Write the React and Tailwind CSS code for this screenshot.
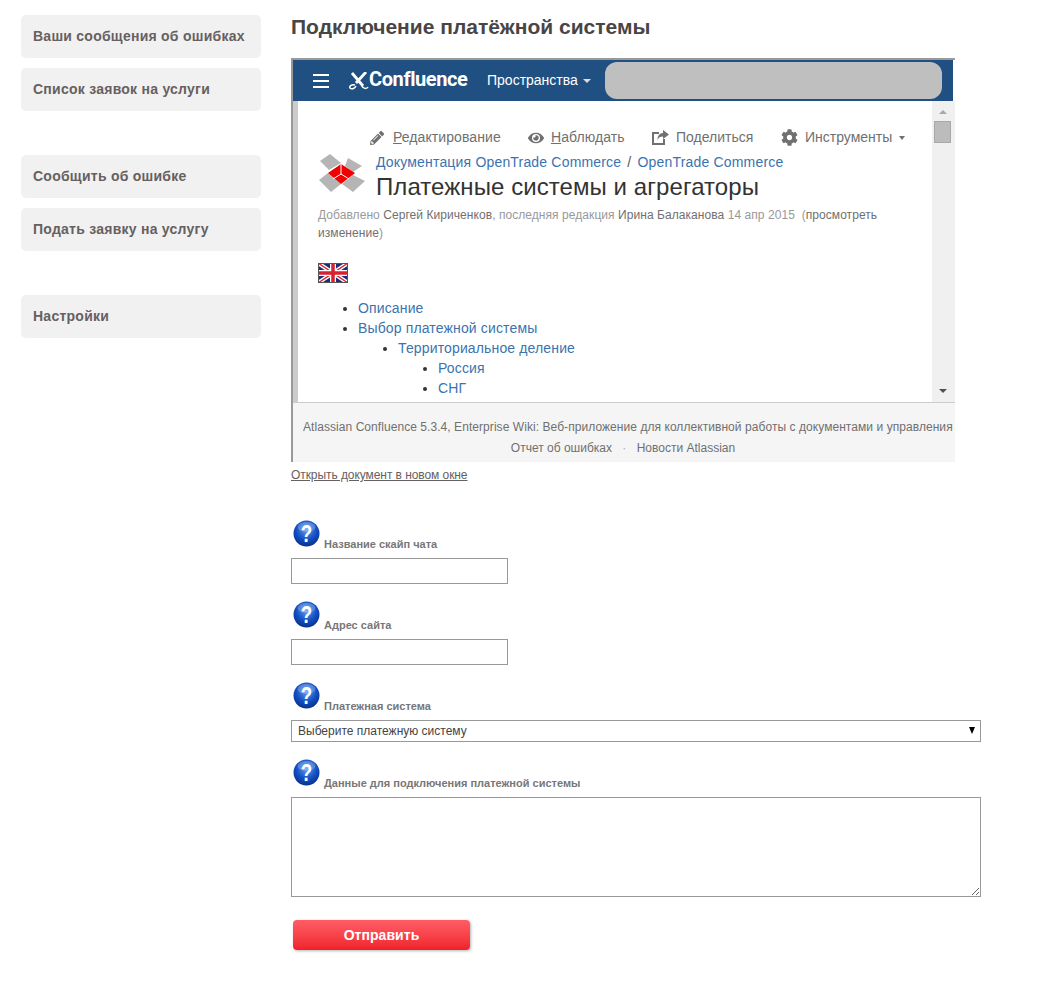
import { FaPencilAlt, FaEye, FaCog } from 'react-icons/fa';

const font = { fontFamily: '"Liberation Sans", Arial, sans-serif' };

function HelpIcon({ id }) {
  return (
    <svg width="27" height="27" viewBox="0 0 27 27" className="shrink-0">
      <defs>
        <radialGradient id={id} cx="50%" cy="35%" r="70%">
          <stop offset="0%" stopColor="#5f9cf0" />
          <stop offset="55%" stopColor="#1350c4" />
          <stop offset="100%" stopColor="#062a80" />
        </radialGradient>
      </defs>
      <circle cx="13.5" cy="13.5" r="13" fill={`url(#${id})`} />
      <ellipse cx="13.5" cy="7" rx="9" ry="5" fill="#ffffff" opacity="0.22" />
      <text x="0" y="0" transform="translate(13.5 22) scale(0.78 1)" textAnchor="middle" fontSize="24" fontWeight="700" fill="#ffffff" fontFamily="Liberation Sans, sans-serif">?</text>
    </svg>
  );
}

function BoxLogo() {
  return (
    <svg width="46" height="38" viewBox="0 0 46 38" className="shrink-0">
      <polygon points="11,0 22,9 10,16 1,7" fill="#b5b5b5" />
      <polygon points="29,4 43,12 34,18 26,12" fill="#b5b5b5" />
      <polygon points="0,26 9,19 22,30 12,38" fill="#b5b5b5" />
      <polygon points="23,30 34,21 46,27 34,38" fill="#b5b5b5" />
      <polygon points="9,19 22,10 36,19 22,30" fill="#ee0000" />
      <path d="M22 10 V20 M22 20 L14 25 M22 20 L30 25" stroke="#ffffff" strokeWidth="1" fill="none" />
    </svg>
  );
}

function Flag() {
  return (
    <svg width="30" height="20" viewBox="0 0 30 20" className="block">
      <rect width="30" height="20" fill="#1a2d78" />
      <path d="M0 0 L30 20 M30 0 L0 20" stroke="#ffffff" strokeWidth="4" />
      <path d="M0 0 L30 20 M30 0 L0 20" stroke="#d8202f" strokeWidth="1.4" />
      <path d="M15 0 V20 M0 10 H30" stroke="#ffffff" strokeWidth="6" />
      <path d="M15 0 V20 M0 10 H30" stroke="#d8202f" strokeWidth="3.5" />
      <rect x="0.5" y="0.5" width="29" height="19" fill="none" stroke="#555555" />
    </svg>
  );
}

function ConfluenceMark() {
  return (
    <svg width="20" height="18" viewBox="0 0 20 18" className="shrink-0">
      <path d="M3 1 L14 14 M17 0 L7 11" stroke="#ffffff" strokeWidth="2.8" fill="none" />
      <path d="M6 13 C3 12 0 14 1 16 C3 18 6 16 7 14" stroke="#ffffff" strokeWidth="1.5" fill="none" />
      <path d="M13 14 C14 17 18 17 19 15" stroke="#ffffff" strokeWidth="1.5" fill="none" />
    </svg>
  );
}

function ShareIcon() {
  return (
    <svg width="17" height="15" viewBox="0 0 17 15" className="shrink-0">
      <path d="M7 3 H1 V14 H12 V9" stroke="#707070" strokeWidth="2" fill="none" />
      <path d="M11 0 L17 4.5 L11 9 V6.5 C8 6.5 6.5 7.5 5.5 10 C5.5 6 7.5 3 11 3 Z" fill="#707070" />
    </svg>
  );
}

function ConfluenceShot() {
  return (
    <div className="w-[664px] h-[404px] border-t-2 border-l-2 border-[#999999] flex flex-col overflow-hidden">
      {/* Navbar */}
      <div className="h-[41px] w-[660px] shrink-0 bg-[#205081] flex items-center pl-[20px] text-white">
        <div className="w-[16px] flex flex-col gap-[4px] mr-[20px]">
          <div className="h-[2px] bg-white" />
          <div className="h-[2px] bg-white" />
          <div className="h-[2px] bg-white" />
        </div>
        <ConfluenceMark />
        <span className="text-[20px] font-bold tracking-[-0.4px] w-[98px] mb-[3px]" style={{ fontFamily: 'Roboto, sans-serif' }}>Confluence</span>
        <span className="ml-[20px] text-[14px] mb-[1px]">Пространства</span>
        <div className="ml-[5px] w-0 h-0 border-x-[4px] border-x-transparent border-t-[4px] border-t-[#dddddd]" />
        <div className="ml-[14px] mb-[1px] w-[337px] h-[37px] bg-[#bfbfbf] rounded-[12px]" />
      </div>

      <div className="flex h-[301px] w-[662px] shrink-0">
        {/* Splitter */}
        <div className="w-[5px] shrink-0 bg-[#cccccc] flex items-center">
          <div className="w-[4px] h-[24px] mt-[-2px] bg-[radial-gradient(#777777_40%,transparent_45%)] bg-[length:2px_2px]" />
        </div>

        {/* Page content */}
        <div className="flex-1 min-w-0 pl-[20px] overflow-hidden">
          <div className="h-[23px] mt-[25px] flex items-center text-[14px] text-[#707070] whitespace-nowrap pl-[52px]">
            <FaPencilAlt className="w-[14px] h-[14px] text-[#707070]" />
            <span className="ml-[9px] w-[135px] tracking-[0.08px]"><span className="underline">Р</span>едактирование</span>
            <FaEye className="w-[16px] h-[16px] text-[#707070]" />
            <span className="ml-[7px] w-[101px] tracking-[0.08px]"><span className="underline">Н</span>аблюдать</span>
            <ShareIcon />
            <span className="ml-[7px] w-[105px]">Поделиться</span>
            <FaCog className="w-[17px] h-[17px] text-[#707070]" />
            <span className="ml-[7px] w-[94px]">Инструменты</span>
            <div className="w-0 h-0 border-x-[3px] border-x-transparent border-t-[4px] border-t-[#707070]" />
          </div>
          <div className="flex mt-[3px]">
            <div className="mt-[2px] ml-[1px] mr-[11px]"><BoxLogo /></div>
            <div className="whitespace-nowrap">
              <div className="text-[14px] leading-[20px] tracking-[0.18px] text-[#3b73af]">Документация OpenTrade Commerce <span className="text-[#555555] mx-[2px]">/</span> OpenTrade Commerce</div>
              <div className="text-[24px] leading-[30px] tracking-[0.07px] text-[#333333]">Платежные системы и агрегаторы</div>
            </div>
          </div>
          <div className="mt-[4px] text-[12px] leading-[18px] tracking-[0.06px] text-[#999999] w-[590px]">
            Добавлено <span className="text-[#707070]">Сергей Кириченков</span>, последняя редакция <span className="text-[#707070]">Ирина Балаканова</span> 14 апр 2015 &nbsp;(<span className="text-[#707070]">просмотреть изменение</span>)
          </div>
          <div className="mt-[21px]"><Flag /></div>
          <ul className="mt-[15px] pl-[40px] list-disc text-[14px] leading-[20px] tracking-[0.14px] text-[#3b73af] marker:text-[#333333]">
            <li>Описание</li>
            <li>
              Выбор платежной системы
              <ul className="pl-[40px] list-disc">
                <li>
                  Территориальное деление
                  <ul className="pl-[40px] list-disc">
                    <li>Россия</li>
                    <li>СНГ</li>
                  </ul>
                </li>
              </ul>
            </li>
          </ul>
        </div>

        {/* Scrollbar */}
        <div className="w-[23px] shrink-0 bg-[#f0f0f0] flex flex-col items-center pt-[9px] pb-[9px] pr-[2px]">
          <div className="w-0 h-0 border-x-[4px] border-x-transparent border-b-[4px] border-b-[#a8a8a8]" />
          <div className="w-[17px] h-[22px] mt-[7px] bg-[#bcbcbc] border border-[#a8a8a8]" />
          <div className="mt-auto w-0 h-0 border-x-[4px] border-x-transparent border-t-[4px] border-t-[#505050]" />
        </div>
      </div>

      {/* Footer */}
      <div className="flex-1 w-[662px] bg-[#f5f5f5] border-t border-[#cccccc] text-[12px] leading-[22px] text-[#707070] overflow-hidden pt-[13px]">
        <div className="whitespace-nowrap pl-[10px] tracking-[0.06px]">Atlassian Confluence 5.3.4, Enterprise Wiki: Веб-приложение для коллективной работы с документами и управления</div>
        <div className="text-center mt-[-1px] pr-[2px]">Отчет об ошибках <span className="mx-[7px] text-[#aaaaaa]">·</span> Новости Atlassian</div>
      </div>
    </div>
  );
}

function FieldLabel({ id, children }) {
  return (
    <div className="h-[38px] pl-[2px] flex items-start">
      <HelpIcon id={id} />
      <span className="ml-[4px] mt-[17px] text-[11px] leading-[14px] font-bold text-[#777777]">{children}</span>
    </div>
  );
}

const navGroups = [
  ['Ваши сообщения об ошибках', 'Список заявок на услуги'],
  ['Сообщить об ошибке', 'Подать заявку на услугу'],
  ['Настройки'],
];

export default function App() {
  return (
    <div className="min-h-[983px] bg-white flex" style={font}>
      {/* Sidebar */}
      <aside className="w-[240px] ml-[21px] mt-[15px] shrink-0 flex flex-col gap-[44px]">
        {navGroups.map((group, i) => (
          <div key={i} className="flex flex-col gap-[10px]">
            {group.map((item) => (
              <a key={item} className="h-[43px] flex items-center pl-[12px] bg-[#f1f1f1] rounded-[5px] text-[14px] font-bold tracking-[0.25px] text-[#666060]">{item}</a>
            ))}
          </div>
        ))}
      </aside>

      {/* Main */}
      <main className="ml-[30px] flex-1 min-w-0">
        <h1 className="mt-[14px] h-[44px] text-[21px] leading-[26px] font-bold text-[#4a4545]">Подключение платёжной системы</h1>
        <ConfluenceShot />
        <a className="block mt-[6px] text-[12px] leading-[14px] tracking-[-0.07px] underline text-[#666060]">Открыть документ в новом окне</a>

        <form className="mt-[38px] w-[690px]">
          <FieldLabel id="h1">Название скайп чата</FieldLabel>
          <input type="text" className="block w-[217px] h-[26px] border border-[#999999] bg-white" />

          <div className="mt-[17px]"><FieldLabel id="h2">Адрес сайта</FieldLabel></div>
          <input type="text" className="block w-[217px] h-[26px] border border-[#999999] bg-white" />

          <div className="mt-[17px]"><FieldLabel id="h3">Платежная система</FieldLabel></div>
          <div className="relative">
            <select className="block w-full h-[22px] border border-[#999999] bg-white pl-[6px] text-[12px] text-[#444444] appearance-none">
              <option>Выберите платежную систему</option>
            </select>
            <span className="absolute right-[6px] top-[7px] w-0 h-0 border-x-[3.5px] border-x-transparent border-t-[7px] border-t-black" />
          </div>

          <div className="mt-[17px]"><FieldLabel id="h4">Данные для подключения платежной системы</FieldLabel></div>
          <textarea className="block w-[690px] h-[100px] border border-[#999999] bg-white" />

          <button type="button" className="block mt-[23px] ml-[2px] w-[177px] h-[30px] rounded-[4px] bg-gradient-to-b from-[#ff5c66] to-[#f01f29] text-white text-[14px] font-bold tracking-[0.05px] shadow-[1px_1px_3px_rgba(0,0,0,0.3)]">Отправить</button>
        </form>
      </main>
    </div>
  );
}
